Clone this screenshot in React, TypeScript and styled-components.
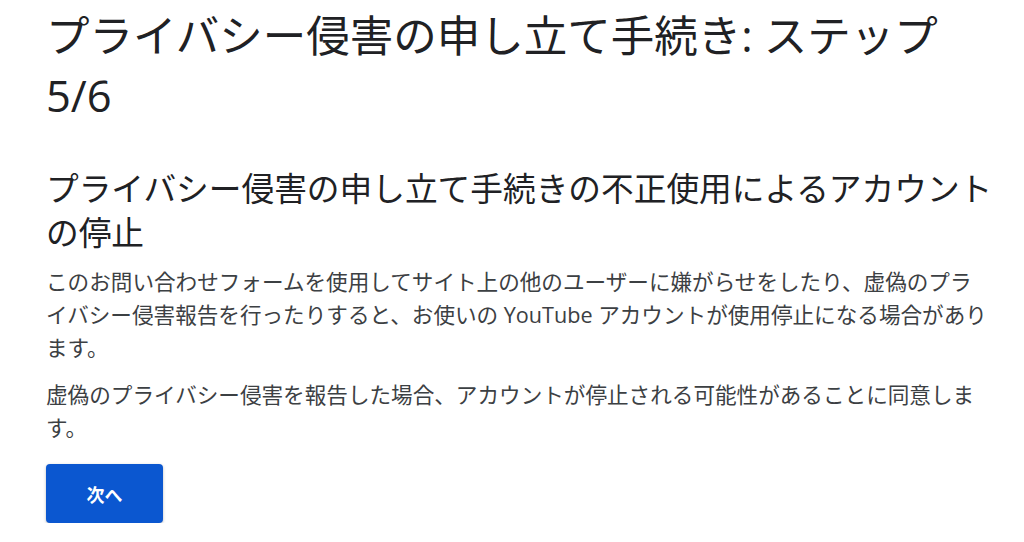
import React from 'react'
import styled, { createGlobalStyle } from 'styled-components'

const GlobalStyle = createGlobalStyle`
  html, body {
    margin: 0;
    padding: 0;
    background: #ffffff;
  }
  body {
    font-family: "Open Sans", "Noto Sans CJK JP", "Noto Sans", sans-serif;
    color: #202124;
  }
`

const Page = styled.main`
  width: 960px;
  padding: 6px 0 0 46px;
`

const Title = styled.h1`
  margin: 0;
  max-width: 941px;
  font-size: 43.5px;
  line-height: 60px;
  font-weight: 400;
  color: #202124;
`

const Subtitle = styled.h2`
  margin: 41px 0 0;
  font-size: 32.7px;
  line-height: 44px;
  font-weight: 400;
  color: #202124;
`

const Paragraph = styled.p`
  margin: ${(props: { first?: boolean }) => (props.first ? '10px 0 0' : '14px 0 0')};
  max-width: 941px;
  font-size: 21.6px;
  line-height: 33px;
  color: #3c4043;
`

const NextButton = styled.button`
  margin-top: 20px;
  width: 117px;
  height: 59px;
  border: none;
  border-radius: 4px;
  background: #0b57d0;
  color: #ffffff;
  font-family: "Noto Sans CJK JP", sans-serif;
  font-size: 18px;
  font-weight: 700;
  box-shadow: 0 1px 3px rgba(60, 64, 67, 0.35);
  cursor: pointer;
`

export default function App() {
  return (
    <>
      <GlobalStyle />
      <Page>
        <Title>プライバシー侵害の申し立て手続き: ステップ 5/6</Title>
        <Subtitle>プライバシー侵害の申し立て手続きの不正使用によるアカウントの停止</Subtitle>
        <Paragraph first>
          このお問い合わせフォームを使用してサイト上の他のユーザーに嫌がらせをしたり、虚偽のプライバシー侵害報告を行ったりすると、お使いの YouTube アカウントが使用停止になる場合があります。
        </Paragraph>
        <Paragraph>
          虚偽のプライバシー侵害を報告した場合、アカウントが停止される可能性があることに同意します。
        </Paragraph>
        <NextButton>次へ</NextButton>
      </Page>
    </>
  )
}
